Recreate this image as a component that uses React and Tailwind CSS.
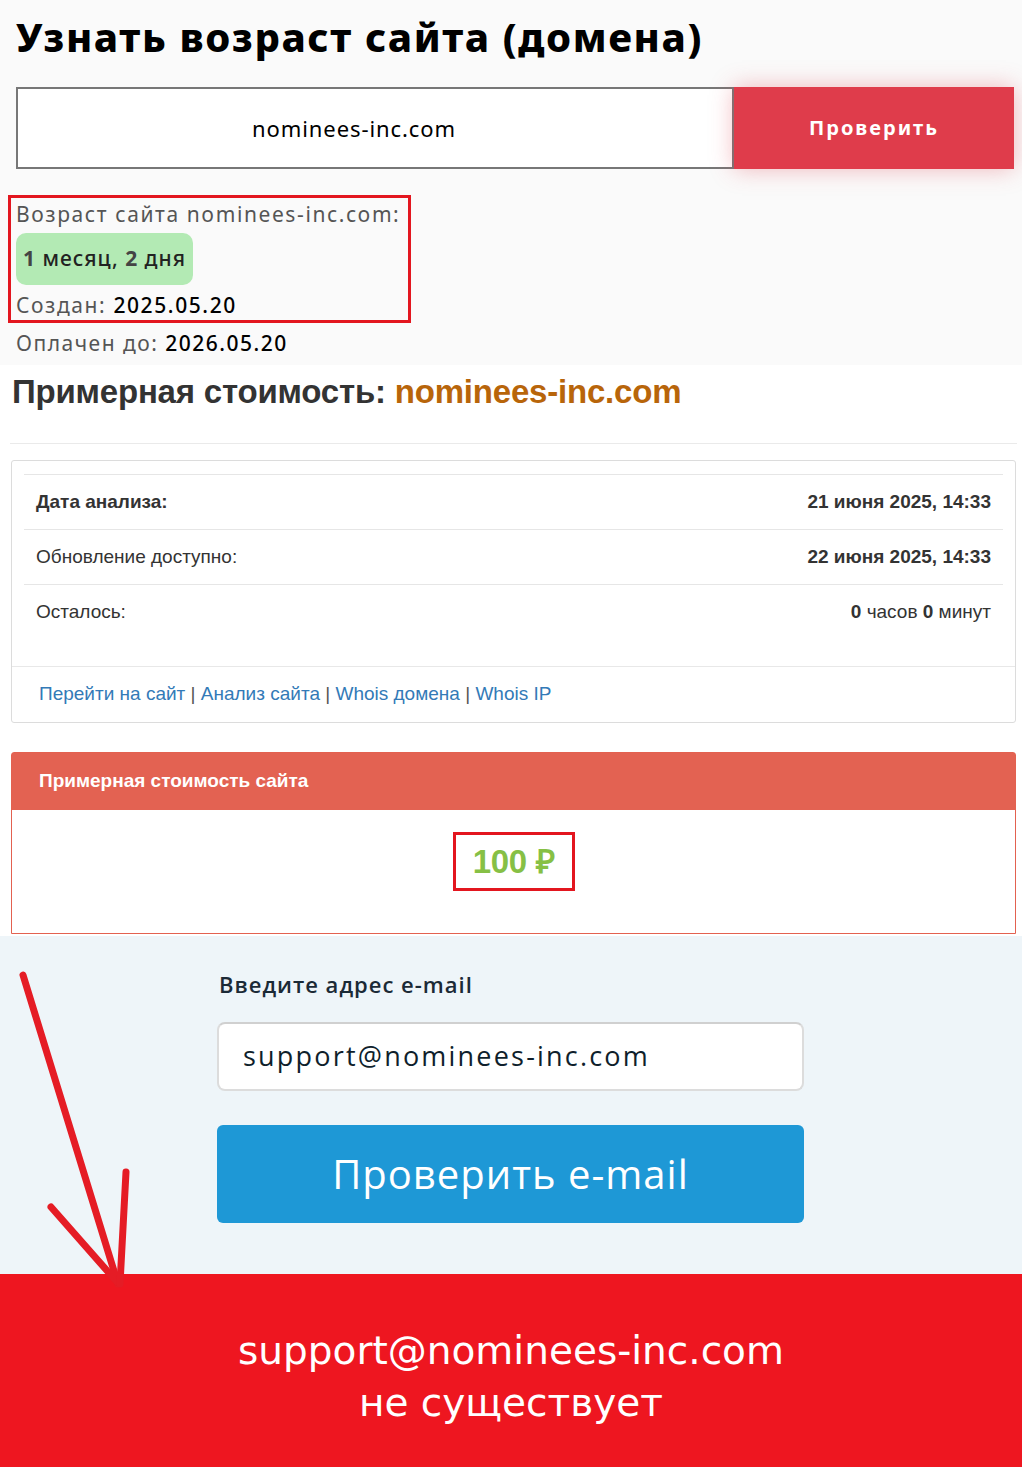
import React from "react";

const arial = "font-['Liberation_Sans','Arial',sans-serif]";

function DomainAge() {
  return (
    <section className="bg-[#fafafa] pb-2 pl-4 pr-2 pt-[13px] font-['Noto_Sans',sans-serif]">
      <h1 className="text-[40px] leading-[48px] font-extrabold tracking-[1.6px] text-black">
        Узнать возраст сайта (домена)
      </h1>
      <form className="mt-[26px] flex h-[82px]">
        <div className="flex w-[718px] shrink-0 items-center justify-center border-2 border-[#777] bg-white pr-[42px] text-[22px] tracking-[0.9px] text-black">
          nominees-inc.com
        </div>
        <button
          type="button"
          className="w-[280px] shrink-0 bg-[#df3c4b] text-[20px] font-bold tracking-[2px] text-white shadow-[0_0_22px_rgba(224,60,75,0.35)]"
        >
          Проверить
        </button>
      </form>

      {/* annotation frame */}
      <div className="-ml-2 mt-[26px] w-[403px] border-[3px] border-[#e3161f] px-[5px] pb-[1px] pt-[2px] tracking-[1.6px]">
        <p className="text-[21px] leading-[28px] text-[#555]">Возраст сайта nominees-inc.com:</p>
        <div className="mt-[5px] inline-flex h-[52px] items-center rounded-[10px] bg-[#b3eab4] px-[7px] text-[21px] font-medium tracking-[1px] text-[#222]">
          <b className="font-bold text-[#444]">1</b>&nbsp;месяц,&nbsp;<b className="font-bold text-[#444]">2</b>&nbsp;дня
        </div>
        <p className="mt-[6px] text-[21px] leading-[28px] text-[#555]">
          Создан: <span className="font-medium text-black">2025.05.20</span>
        </p>
      </div>
      <p className="mt-[6px] text-[21px] leading-[28px] tracking-[1.5px] text-[#555]">
        Оплачен до: <span className="font-medium text-black">2026.05.20</span>
      </p>
    </section>
  );
}

function Row({ label, value, bold }) {
  return (
    <div className="flex h-[55px] items-center justify-between border-t border-[#e6e6e6] px-3 text-[19px]">
      <span className={bold ? "font-bold text-[#333]" : "text-[#333]"}>{label}</span>
      <span className="text-[#333]">{value}</span>
    </div>
  );
}

function Estimate() {
  return (
    <section className={`bg-white pb-[2px] pl-[11px] pr-[6px] pt-[7px] ${arial}`}>
      <h2 className="ml-[1px] text-[33px] font-bold leading-[40px] tracking-[-0.2px] text-[#333]">
        Примерная стоимость: <span className="text-[#b8650a]">nominees-inc.com</span>
      </h2>
      <hr className="-mx-px mt-[31px] border-[#eaeaea]" />

      <div className="mt-[16px] rounded-[3px] border border-[#dcdcdc] bg-white">
        <div className="px-3 pb-[27px] pt-[13px]">
          <Row label="Дата анализа:" bold value={<b>21 июня 2025, 14:33</b>} />
          <Row label="Обновление доступно:" value={<b>22 июня 2025, 14:33</b>} />
          <Row
            label="Осталось:"
            value={
              <>
                <b>0</b> часов <b>0</b> минут
              </>
            }
          />
        </div>
        <div className="flex h-[56px] items-center border-t border-[#e8e8e8] px-[27px] text-[19px] text-[#555]">
          <a className="text-[#337ab7]">Перейти на сайт</a>&nbsp;|&nbsp;
          <a className="text-[#337ab7]">Анализ сайта</a>&nbsp;|&nbsp;
          <a className="text-[#337ab7]">Whois домена</a>&nbsp;|&nbsp;
          <a className="text-[#337ab7]">Whois IP</a>
        </div>
      </div>

      <div className="mt-[29px] rounded-t-[3px] border border-[#e36150] bg-white">
        <div className="flex h-[57px] items-center bg-[#e36252] px-[27px] text-[19px] font-bold text-white">
          Примерная стоимость сайта
        </div>
        <div className="flex h-[123px] justify-center pt-[22px]">
          <div className="flex h-[59px] w-[122px] items-center justify-center border-[3px] border-[#e3161f] text-[33px] font-bold tracking-[-0.3px] text-[#86c045]">
            100 ₽
          </div>
        </div>
      </div>
    </section>
  );
}

function EmailCheck() {
  return (
    <section className="bg-[#eef5f9] pb-[51px] pl-[217px] pt-[33px] font-['Open_Sans',sans-serif]">
      <div className="w-[587px]">
        <label className="ml-[2px] block text-[22px] font-semibold leading-[30px] tracking-[1px] text-[#1b2a36]">
          Введите адрес e-mail
        </label>
        <div className="mt-[23px] flex h-[69px] items-center rounded-[8px] border-2 border-[#dcdcdc] border-t-[#d0d0d0] bg-white px-[24px] text-[27px] font-medium tracking-[2.2px] text-[#0f1f2c]">
          support@nominees-inc.com
        </div>
        <button
          type="button"
          className="mt-[34px] h-[98px] w-full rounded-[6px] bg-[#1e98d6] text-[40px] tracking-[1px] text-white"
        >
          Проверить e-mail
        </button>
      </div>
    </section>
  );
}

function Result() {
  return (
    <section className="flex h-[194px] flex-col items-center justify-center bg-[#ee1620] pt-[12px] text-center font-['DejaVu_Sans',sans-serif] text-[39px] leading-[52px] text-white">
      <p>support@nominees-inc.com</p>
      <p>не существует</p>
    </section>
  );
}

export default function App() {
  return (
    <div className="relative w-[1022px] overflow-hidden bg-white">
      <DomainAge />
      <Estimate />
      <EmailCheck />
      <Result />

      {/* hand-drawn arrow */}
      <svg className="pointer-events-none absolute left-0 top-0" width="200" height="1467">
        <g stroke="#e51c25" strokeWidth="7" strokeLinecap="round" fill="none">
          <path d="M23 975 L118 1284" />
          <path d="M51 1207 L117 1282" />
          <path d="M126 1172 L120 1284" />
        </g>
      </svg>
    </div>
  );
}
